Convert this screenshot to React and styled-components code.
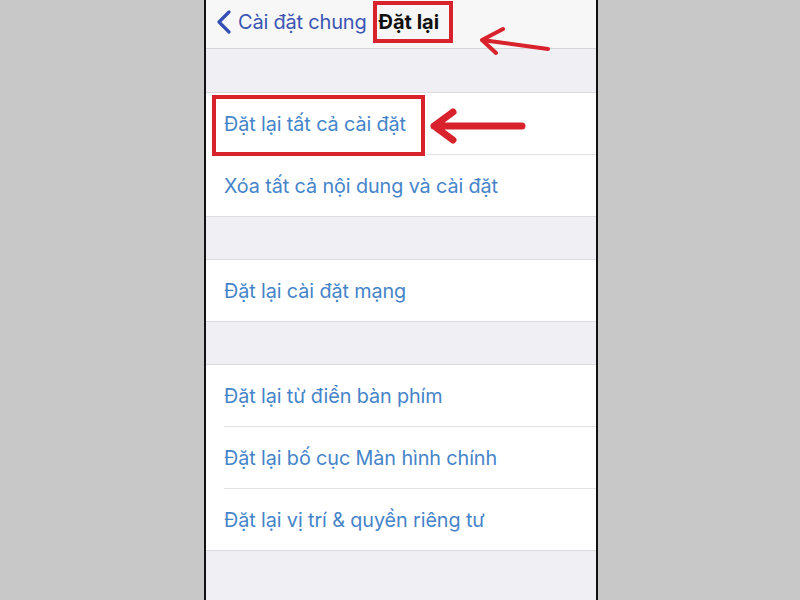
import React from 'react';
import styled, { createGlobalStyle } from 'styled-components';

const GlobalStyle = createGlobalStyle`
    html, body {
        margin: 0;
        padding: 0;
        background: #c8c8c8;
        height: 100%;
        overflow: hidden;
    }
    #root {
        height: 100%;
    }
`;

const groups = [
    ["Đặt lại tất cả cài đặt", "Xóa tất cả nội dung và cài đặt"],
    ["Đặt lại cài đặt mạng"],
    ["Đặt lại từ điển bàn phím", "Đặt lại bố cục Màn hình chính", "Đặt lại vị trí & quyền riêng tư"],
];

function BackChevron(){
    return (
        <svg width="16" height="24" viewBox="0 0 16 24">
            <path d="M13 2 L3 12 L13 22" fill="none" stroke="#3450b5" strokeWidth="3.2" strokeLinecap="round" strokeLinejoin="round"/>
        </svg>
    );
}

function Arrow({ width, height, d, strokeWidth }){
    return (
        <svg width={width} height={height} viewBox={`0 0 ${width} ${height}`}>
            <path d={d} fill="none" stroke="#d8232c" strokeWidth={strokeWidth} strokeLinecap="round" strokeLinejoin="round"/>
        </svg>
    );
}

export default function App(){
    return (
        <>
            <GlobalStyle/>
            <Page>
                <Phone>
                    <NavBar>
                        <BackChevron/>
                        <BackLabel>Cài đặt chung</BackLabel>
                        <Title>Đặt lại</Title>
                        <TopArrow>
                            <Arrow width={74} height={32} strokeWidth={4} d="M70 24 L4 15 M25 4 L4 15 L18 28"/>
                        </TopArrow>
                    </NavBar>
                    <Content>
                        {groups.map((rows, g) =>
                            <Group key={g}>
                                {rows.map((label, i) =>
                                    <Row key={i} last={i === rows.length - 1}>
                                        <Label>{label}</Label>
                                        {g === 0 && i === 0 &&
                                            <>
                                                <Highlight/>
                                                <RowArrow>
                                                    <Arrow width={100} height={40} strokeWidth={7} d="M94 20 L6 20 M25 6 L6 20 L25 34"/>
                                                </RowArrow>
                                            </>
                                        }
                                    </Row>
                                )}
                            </Group>
                        )}
                    </Content>
                </Phone>
            </Page>
        </>
    );
}

const Page = styled.div`
    height: 100%;
    padding-left: 204px;
    font-family: Inter, "Noto Sans", sans-serif;
`;

const Phone = styled.div`
    width: 390px;
    height: 100%;
    border-left: 2px solid #111;
    border-right: 2px solid #111;
    background: #efeff4;
    display: flex;
    flex-direction: column;
`;

const NavBar = styled.div`
    position: relative;
    height: 49px;
    box-sizing: border-box;
    padding: 0 0 4px 10px;
    background: #f7f7f7;
    border-bottom: 1px solid #d6d6da;
    display: flex;
    align-items: center;
    gap: 6px;
`;

const BackLabel = styled.span`
    font-size: 20px;
    color: #3a55b4;
    letter-spacing: -0.2px;
`;

const Title = styled.span`
    font-size: 20px;
    font-weight: 700;
    color: #111;
    margin-left: 4px;
    padding: 0 10px 0 2px;
    line-height: 34px;
    outline: 4px solid #d8232c;
`;

const TopArrow = styled.div`
    position: absolute;
    left: 272px;
    top: 25px;
    line-height: 0;
`;

const Content = styled.div`
    padding-top: 43px;
    display: flex;
    flex-direction: column;
    gap: 42px;
`;

const Group = styled.div`
    background: #fff;
    border-top: 1px solid #dcdce0;
    border-bottom: 1px solid #dcdce0;
`;

const Row = styled.div`
    position: relative;
    height: 61px;
    margin-left: 18px;
    display: flex;
    align-items: center;
    border-bottom: ${props => props.last ? "none" : "1px solid #e2e2e6"};
`;

const Label = styled.span`
    font-size: 19.8px;
    color: #4584c9;
    letter-spacing: -0.1px;
`;

const Highlight = styled.div`
    position: absolute;
    left: -12px;
    top: 2px;
    width: 205px;
    height: 53px;
    border: 4px solid #d8232c;
`;

const RowArrow = styled.div`
    position: absolute;
    left: 204px;
    top: 13px;
    line-height: 0;
`;
